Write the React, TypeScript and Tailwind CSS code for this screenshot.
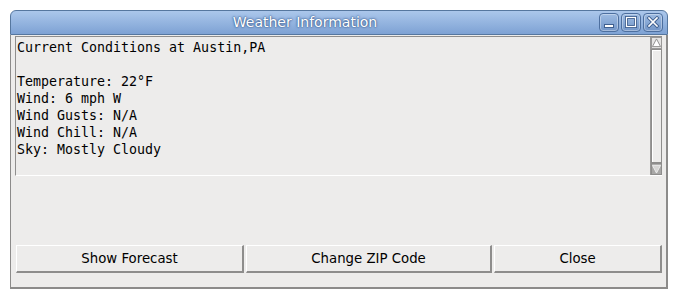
const TitleButton = ({ kind }: { kind: 'min' | 'max' | 'close' }) => {
  return (
    <div className="w-[20px] h-[19px] rounded-[4px] border border-[#4d6f9f] bg-gradient-to-b from-[#9dbbe2] to-[#7396c8] shadow-[inset_0_0_0_1px_rgba(255,255,255,0.35)] flex items-center justify-center">
      <svg width="14" height="13" viewBox="0 0 14 13">
        {kind === 'min' && (
          <rect x="2.5" y="8.5" width="9" height="3" fill="#fff" stroke="#3f5f8f" strokeWidth="1" />
        )}
        {kind === 'max' && (
          <g>
            <rect x="2.5" y="1.5" width="9" height="9" fill="none" stroke="#3f5f8f" strokeWidth="3" />
            <rect x="2.5" y="1.5" width="9" height="9" fill="none" stroke="#fff" strokeWidth="1.2" />
          </g>
        )}
        {kind === 'close' && (
          <g strokeLinecap="square">
            <path d="M3 2 L11 10 M11 2 L3 10" stroke="#3f5f8f" strokeWidth="3.4" />
            <path d="M3 2 L11 10 M11 2 L3 10" stroke="#fff" strokeWidth="1.6" />
          </g>
        )}
      </svg>
    </div>
  );
};

const DialogButton = ({ label }: { label: string }) => {
  return (
    <button className="flex-auto h-[28px] px-2 pt-px bg-[#edeceb] border-t border-l border-t-white border-l-white border-b-2 border-r-2 border-b-[#8e8d8c] border-r-[#8e8d8c] text-[13.3px] text-black font-['DejaVu_Sans',sans-serif]">
      {label}
    </button>
  );
};

const lines = [
  'Current Conditions at Austin,PA',
  '',
  'Temperature: 22°F',
  'Wind: 6 mph W',
  'Wind Gusts: N/A',
  'Wind Chill: N/A',
  'Sky: Mostly Cloudy',
];

export default function App() {
  return (
    <div className="w-[678px] h-[299px] bg-white pt-[10px] pl-[10px]">
      <div className="w-[658px] h-[279px] flex flex-col">
        <div className="h-[25px] rounded-t-[6px] border border-[#56779f] bg-gradient-to-b from-[#abc7eb] to-[#7ea2d4] flex items-center pr-[4px]">
          <div className="flex-1 text-center text-[14px] text-white font-['DejaVu_Sans',sans-serif] [text-shadow:0_0_1px_#3d5f90,0_0_2px_#3d5f90,0_0_3px_#5a7db0]">
            Weather Information
          </div>
          <div className="flex gap-[2px]">
            <TitleButton kind="min" />
            <TitleButton kind="max" />
            <TitleButton kind="close" />
          </div>
        </div>
        <div className="flex-1 flex flex-col bg-[#edeceb] border-l border-r-2 border-b-2 border-[#8c8b8a] px-[4px] pb-[14px]">
          <div className="flex h-[140px] mt-px border-t border-l border-t-[#8f8e8d] border-l-[#8f8e8d] border-b border-b-white">
            <div className="flex-1 pl-px pt-[2px] font-['DejaVu_Sans_Mono',monospace] text-[13.3px] leading-[17px] text-black whitespace-pre">
              {lines.map((l, i) => (
                <div key={i} className="h-[17px]">{l}</div>
              ))}
            </div>
            <div className="w-[12px] flex flex-col border-l border-[#9a9998]">
              <div className="h-[12px] bg-[#e6e5e4] border border-[#9a9998] flex items-center justify-center">
                <svg width="10" height="10" viewBox="0 0 10 10">
                  <path d="M5 0.5 L9.5 9 L0.5 9 Z" fill="#fff" stroke="#8a8988" strokeWidth="1" />
                </svg>
              </div>
              <div className="flex-1 bg-[#edeceb] border border-[#8e8d8c] shadow-[inset_1px_1px_0_#fff]" />
              <div className="h-[12px] bg-[#a9a8a7] border border-[#8e8d8c] flex items-center justify-center">
                <svg width="10" height="10" viewBox="0 0 10 10">
                  <path d="M0.5 1 L9.5 1 L5 9.5 Z" fill="#d6d5d4" stroke="#eeeeee" strokeWidth="1" />
                </svg>
              </div>
            </div>
          </div>
          <div className="flex-1" />
          <div className="flex gap-[2px] pl-px">
            <DialogButton label="Show Forecast" />
            <DialogButton label="Change ZIP Code" />
            <DialogButton label="Close" />
          </div>
        </div>
      </div>
    </div>
  );
}
